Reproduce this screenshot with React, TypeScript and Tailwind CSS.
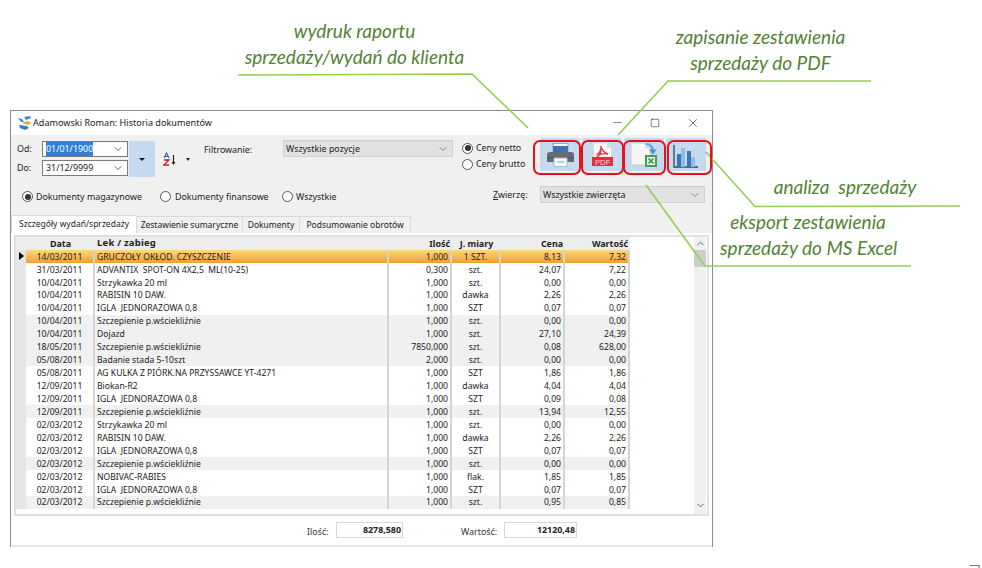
import React from 'react';
import { ChevronDown, ChevronUp, Minus, Square, X } from 'lucide-react';

interface Row {
  date: string;
  name: string;
  qty: string;
  unit: string;
  price: string;
  total: string;
  shaded?: boolean;
}

const rows: Row[] = [
  { date: '14/03/2011', name: 'GRUCZOŁY OKŁOD. CZYSZCZENIE', qty: '1,000', unit: '1 SZT.', price: '8,13', total: '7,32' },
  { date: '31/03/2011', name: 'ADVANTIX  SPOT-ON 4X2,5  ML(10-25)', qty: '0,300', unit: 'szt.', price: '24,07', total: '7,22' },
  { date: '10/04/2011', name: 'Strzykawka 20 ml', qty: '1,000', unit: 'szt.', price: '0,00', total: '0,00' },
  { date: '10/04/2011', name: 'RABISIN 10 DAW.', qty: '1,000', unit: 'dawka', price: '2,26', total: '2,26' },
  { date: '10/04/2011', name: 'IGLA  JEDNORAZOWA 0,8', qty: '1,000', unit: 'SZT', price: '0,07', total: '0,07' },
  { date: '10/04/2011', name: 'Szczepienie p.wściekliźnie', qty: '1,000', unit: 'szt.', price: '0,00', total: '0,00', shaded: true },
  { date: '10/04/2011', name: 'Dojazd', qty: '1,000', unit: 'szt.', price: '27,10', total: '24,39', shaded: true },
  { date: '18/05/2011', name: 'Szczepienie p.wściekliźnie', qty: '7850,000', unit: 'szt.', price: '0,08', total: '628,00', shaded: true },
  { date: '05/08/2011', name: 'Badanie stada 5-10szt', qty: '2,000', unit: 'szt.', price: '0,00', total: '0,00', shaded: true },
  { date: '05/08/2011', name: 'AG KULKA Z PIÓRK.NA PRZYSSAWCE YT-4271', qty: '1,000', unit: 'SZT', price: '1,86', total: '1,86' },
  { date: '12/09/2011', name: 'Biokan-R2', qty: '1,000', unit: 'dawka', price: '4,04', total: '4,04' },
  { date: '12/09/2011', name: 'IGLA  JEDNORAZOWA 0,8', qty: '1,000', unit: 'SZT', price: '0,09', total: '0,08' },
  { date: '12/09/2011', name: 'Szczepienie p.wściekliźnie', qty: '1,000', unit: 'szt.', price: '13,94', total: '12,55', shaded: true },
  { date: '02/03/2012', name: 'Strzykawka 20 ml', qty: '1,000', unit: 'szt.', price: '0,00', total: '0,00' },
  { date: '02/03/2012', name: 'RABISIN 10 DAW.', qty: '1,000', unit: 'dawka', price: '2,26', total: '2,26' },
  { date: '02/03/2012', name: 'IGLA  JEDNORAZOWA 0,8', qty: '1,000', unit: 'SZT', price: '0,07', total: '0,07' },
  { date: '02/03/2012', name: 'Szczepienie p.wściekliźnie', qty: '1,000', unit: 'szt.', price: '0,00', total: '0,00', shaded: true },
  { date: '02/03/2012', name: 'NOBIVAC-RABIES', qty: '1,000', unit: 'flak.', price: '1,85', total: '1,85' },
  { date: '02/03/2012', name: 'IGLA  JEDNORAZOWA 0,8', qty: '1,000', unit: 'SZT', price: '0,07', total: '0,07' },
  { date: '02/03/2012', name: 'Szczepienie p.wściekliźnie', qty: '1,000', unit: 'szt.', price: '0,95', total: '0,85', shaded: true },
];

const Radio = ({ checked }: { checked?: boolean }) => (
  <span className="w-[11px] h-[11px] rounded-full border border-[#555] bg-white flex items-center justify-center shrink-0">
    {checked && <span className="w-[6px] h-[6px] rounded-full bg-[#333]" />}
  </span>
);

const AppIcon = () => (
  <svg width="16" height="16" viewBox="0 0 16 16" className="shrink-0">
    <path d="M1 3l4 1 2 3-3 0z" fill="#3b8ad8" />
    <path d="M7 2l6-1 1 2-5 2z" fill="#3b8ad8" />
    <path d="M5 8l6-2 3 2-3 2z" fill="#f0a030" />
    <path d="M2 10l8 1 2 2-4 2-5-2z" fill="#2f7fd0" />
  </svg>
);

const PrinterIcon = () => (
  <svg width="27" height="24" viewBox="0 0 27 24" className="mt-[1px]">
    <rect x="6" y="0.5" width="15" height="8" fill="#f4f7fa" stroke="#9aa6b2" />
    <rect x="6" y="3" width="15" height="7" fill="#3d72ad" />
    <path d="M0 12a3 3 0 0 1 3-3h21a3 3 0 0 1 3 3v7H0z" fill="#626c76" />
    <rect x="0" y="14" width="27" height="1.5" fill="#4f5962" />
    <rect x="7" y="15" width="13" height="8.5" fill="#f7fafc" stroke="#b4bdc6" />
    <rect x="10" y="18" width="7" height="2" fill="#b5cde8" />
  </svg>
);

const PdfIcon = () => (
  <svg width="21" height="25" viewBox="0 0 21 25">
    <path d="M1.5 1h13l5 5v17h-18z" fill="#f8f8f8" stroke="#dadada" />
    <path d="M14.5 1v5h5z" fill="#dcdcdc" />
    <path d="M4 13c3-1 6-6 5-9 0 3 3 7 7 8-4-1-9 0-12 4 2-1 4-4 5-7" fill="none" stroke="#e0303c" strokeWidth="1.3" />
    <rect x="0" y="15" width="21" height="9" fill="#ed2a3f" />
    <text x="10.5" y="22.5" textAnchor="middle" fontSize="7.5" fontFamily="Liberation Sans, sans-serif" fill="#ffd9dc">PDF</text>
  </svg>
);

const ExcelIcon = () => (
  <svg width="28" height="26" viewBox="0 0 28 26">
    <path d="M1 1h14l5 5v17H1z" fill="#f6f6f6" stroke="#cbcbcb" />
    <path d="M15 1v5h5z" fill="#d8d8d8" />
    <path d="M16 2c4 0 6 2 7 6" fill="none" stroke="#56a6e2" strokeWidth="2.2" />
    <path d="M19 7.5h7.5l-3.5 5z" fill="#3f94d8" />
    <rect x="15" y="13" width="12" height="12" fill="#4a9a58" />
    <rect x="17" y="15" width="8" height="8" fill="#eef6ef" />
    <path d="M18.5 16.5l5 5M23.5 16.5l-5 5" stroke="#3e8f4c" strokeWidth="1.7" />
  </svg>
);

const ChartIcon = () => (
  <svg width="26" height="25" viewBox="0 0 26 25" className="mt-[3px]">
    <path d="M1 1v22h24" fill="none" stroke="#3a4652" strokeWidth="1.3" />
    <rect x="4" y="10" width="4" height="13" fill="#3a75b5" />
    <rect x="8" y="4" width="4" height="19" fill="#93b9e6" />
    <rect x="14" y="7" width="4" height="16" fill="#3a75b5" />
    <rect x="18" y="13" width="4" height="10" fill="#93b9e6" />
  </svg>
);

const SortIcon = () => (
  <svg width="14" height="14" viewBox="0 0 14 14">
    <path d="M1 6l2.5-5L6 6M2 4.5h3" fill="none" stroke="#2a5cb8" strokeWidth="1.1" />
    <path d="M1 8h5L1 13h5" fill="none" stroke="#c02030" strokeWidth="1.3" />
    <path d="M10.5 3v8" stroke="#222" strokeWidth="1.2" />
    <path d="M8.5 10h4l-2 3z" fill="#222" />
  </svg>
);

const ToolButton = ({ children }: { children: React.ReactNode }) => (
  <div className="w-[40px] h-[33px] rounded-[2px] bg-[#c5d9ef] flex items-center justify-center">{children}</div>
);

const Combo = ({ label, width }: { label: string; width: string }) => (
  <div className={`${width} h-[17px] bg-[#e1e1e1] border border-[#cfcfcf] flex items-center justify-between pl-[2px] pr-[3px]`}>
    <span>{label}</span>
    <ChevronDown size={12} strokeWidth={1.4} className="text-[#666]" />
  </div>
);

const Annotation = ({ className, lines }: { className: string; lines: string[] }) => (
  <div className={`absolute text-[19px] leading-[26px] italic text-[#548235] text-center whitespace-pre font-['Lato',sans-serif] ${className}`}>
    {lines.map((l) => (
      <div key={l}>{l}</div>
    ))}
  </div>
);

export default function App() {
  return (
    <div className="relative w-[982px] h-[568px] overflow-hidden bg-white pl-[10px] pt-[110px] text-[8.9px] text-[#222] font-['Noto_Sans',sans-serif]">
      <div className="w-[703px] h-[437px] flex flex-col border-l border-t border-r border-[#8c8c8c] bg-white">
        {/* title bar */}
        <div className="h-[24px] flex items-center pl-[6px] shrink-0">
          <AppIcon />
          <span className="text-[9.1px]">Adamowski Roman: Historia dokumentów</span>
          <div className="ml-auto flex">
            <div className="w-[38px] flex justify-center"><Minus size={13} strokeWidth={1} /></div>
            <div className="w-[38px] flex justify-center items-center"><Square size={10} strokeWidth={1.4} /></div>
            <div className="w-[38px] flex justify-center"><X size={14} strokeWidth={1} /></div>
          </div>
        </div>

        {/* toolbar */}
        <div className="h-[98px] shrink-0 bg-[#f0f0f0] flex flex-col">
          <div className="h-[46px] flex items-start">
            <div className="ml-[6px] mt-[6px] w-[111px] flex flex-col gap-[3px]">
              <div className="flex items-center h-[16px]">
                <span className="w-[25px]">Od:</span>
                <div className="w-[86px] h-[16px] border border-[#7a7a7a] bg-white flex items-center justify-between pl-[3px] pr-[3px]">
                  <span className="bg-[#2f7fd6] text-white">01/01/1900</span>
                  <ChevronDown size={12} strokeWidth={1.6} className="text-[#444]" />
                </div>
              </div>
              <div className="flex items-center h-[16px]">
                <span className="w-[25px]">Do:</span>
                <div className="w-[86px] h-[16px] border border-[#7a7a7a] bg-white flex items-center justify-between pl-[3px] pr-[3px]">
                  <span>31/12/9999</span>
                  <ChevronDown size={12} strokeWidth={1.6} className="text-[#444]" />
                </div>
              </div>
            </div>
            <div className="ml-[1px] mt-[6px] w-[26px] h-[36px] bg-[#c5d9ef] flex items-center justify-center">
              <span className="w-0 h-0 border-x-[3px] border-x-transparent border-t-[3px] border-t-[#111]" />
            </div>
            <div className="w-[49px] mt-[17px] pl-[8px] flex items-center gap-[9px]">
              <SortIcon />
              <span className="w-0 h-0 border-x-[2.5px] border-x-transparent border-t-[3px] border-t-[#222]" />
            </div>
            <span className="w-[79px] mt-[8px]">Filtrowanie:</span>
            <div className="mt-[5px]"><Combo label="Wszystkie pozycje" width="w-[170px]" /></div>
            <div className="ml-[9px] mt-[5px] w-[78px] flex flex-col">
              <div className="h-[16px] flex items-center gap-[3px]"><Radio checked /><span>Ceny netto</span></div>
              <div className="h-[16px] flex items-center gap-[3px]"><Radio /><span>Ceny brutto</span></div>
            </div>
            <div className="mt-[3px] flex gap-[2px]">
              <ToolButton><PrinterIcon /></ToolButton>
              <ToolButton><PdfIcon /></ToolButton>
              <ToolButton><ExcelIcon /></ToolButton>
              <ToolButton><ChartIcon /></ToolButton>
            </div>
          </div>

          <div className="h-[34px] flex items-start">
            <div className="ml-[11px] mt-[9px] flex items-center">
              <Radio checked />
              <span className="ml-[3px] w-[124px]">Dokumenty magazynowe</span>
              <Radio />
              <span className="ml-[4px] w-[107px]">Dokumenty finansowe</span>
              <Radio />
              <span className="ml-[3px] w-[197px]">Wszystkie</span>
            </div>
            <span className="mt-[7px] w-[47px]"><span className="underline">Z</span>wierzę:</span>
            <div className="mt-[5px]"><Combo label="Wszystkie zwierzęta" width="w-[165px]" /></div>
          </div>

          {/* tabs */}
          <div className="h-[18px] flex items-end text-[8.5px]">
            <div className="h-[18px] w-[126px] bg-white border border-b-0 border-[#d9d9d9] flex items-center justify-center">Szczegóły wydań/sprzedaży</div>
            <div className="h-[17px] w-[106px] bg-[#f0f0f0] border-t border-r border-[#d9d9d9] flex items-center justify-center">Zestawienie sumaryczne</div>
            <div className="h-[17px] w-[57px] bg-[#f0f0f0] border-t border-r border-[#d9d9d9] flex items-center justify-center">Dokumenty</div>
            <div className="h-[17px] w-[111px] bg-[#f0f0f0] border-t border-r border-[#d9d9d9] flex items-center justify-center">Podsumowanie obrotów</div>
          </div>
        </div>

        {/* grid */}
        <div className="mx-[3px] mt-[2px] h-[281px] shrink-0 border-2 border-[#e0e0e0] flex text-[8.6px]">
          <div className="w-[614px]">
            <div className="flex h-[13px] bg-[#ededed] font-bold items-center text-[8.9px]">
              <span className="w-[10px]" />
              <span className="w-[69px] text-center">Data</span>
              <span className="w-[294px] pl-[2px] text-[9.5px] tracking-[0.2px]">Lek / zabieg</span>
              <span className="w-[63px] text-right pr-[2px]">Ilość</span>
              <span className="w-[49px] text-center">J. miary</span>
              <span className="w-[64px] text-right pr-[2px]">Cena</span>
              <span className="w-[65px] text-right pr-[2px]">Wartość</span>
            </div>
            {rows.map((r, i) => (
              <div
                key={i}
                className={`flex h-[12.95px] items-center leading-none ${
                  i === 0 ? 'bg-gradient-to-b from-[#fcd87c] to-[#efa02c]' : r.shaded ? 'bg-[#f0f0f0]' : 'bg-white'
                }`}
              >
                <span className="w-[10px] h-full bg-[#e5e5e5] flex items-center justify-center">
                  {i === 0 && <span className="w-0 h-0 border-y-[4px] border-y-transparent border-l-[5px] border-l-black" />}
                </span>
                <span className="w-[69px] h-full pt-[1px] flex items-center justify-center border-r-2 border-[#d4d4d4]">{r.date}</span>
                <span className="w-[294px] h-full pt-[1px] flex items-center pl-[2px] border-r-2 border-[#d4d4d4] whitespace-pre">{r.name}</span>
                <span className="w-[63px] h-full pt-[1px] flex items-center justify-end pr-[2px] border-r-2 border-[#d4d4d4]">{r.qty}</span>
                <span className="w-[49px] h-full pt-[1px] flex items-center justify-center border-r-2 border-[#d4d4d4]">{r.unit}</span>
                <span className="w-[64px] h-full pt-[1px] flex items-center justify-end pr-[2px] border-r-2 border-[#d4d4d4]">{r.price}</span>
                <span className="w-[65px] h-full pt-[1px] flex items-center justify-end pr-[2px] border-r-2 border-[#d4d4d4]">{r.total}</span>
              </div>
            ))}
          </div>
          <div className="ml-auto mr-[1px] w-[12px] h-full bg-[#f0f0f0] flex flex-col items-center">
            <ChevronUp size={11} strokeWidth={2} className="text-[#555] mt-[1px]" />
            <div className="w-full h-[17px] bg-[#cdcdcd] mt-[1px]" />
            <ChevronDown size={11} strokeWidth={2} className="text-[#555] mt-auto mb-[3px]" />
          </div>
        </div>

        {/* totals */}
        <div className="flex-1 flex items-start border-b-2 border-[#e5e5e5] pt-[6px]">
          <span className="ml-[296px] w-[29px] mt-[3px] text-[#333]">Ilość:</span>
          <div className="w-[67px] h-[16px] border border-[#d8d8d8] flex items-center justify-end pr-[1px] font-bold">8278,580</div>
          <span className="ml-[58px] w-[43px] mt-[3px] text-[#333]">Wartość:</span>
          <div className="w-[73px] h-[16px] border border-[#d8d8d8] flex items-center justify-end pr-[1px] font-bold">12120,48</div>
        </div>
      </div>

      {/* annotations over the screenshot */}
      <svg className="absolute inset-0 pointer-events-none" width="982" height="568" viewBox="0 0 982 568" fill="none">
        <polyline points="238,75 472,74 528,128" stroke="#92d050" strokeWidth="1.6" />
        <polyline points="618,135 668,81 871,81" stroke="#92d050" strokeWidth="1.6" />
        <polyline points="706,152 755,206.5 960,206" stroke="#92d050" strokeWidth="1.6" />
        <polyline points="646,185 705,266 911,266" stroke="#92d050" strokeWidth="1.6" />
        <path d="M970 565.5h9v3" stroke="#777" strokeWidth="1.2" />
      </svg>
      <div className="absolute left-[533px] top-[140px] w-[48px] h-[35px] border-2 border-[#e8101c] rounded-[7px]" />
      <div className="absolute left-[581px] top-[140px] w-[43px] h-[35px] border-2 border-[#e8101c] rounded-[7px]" />
      <div className="absolute left-[623px] top-[140px] w-[43px] h-[35px] border-2 border-[#e8101c] rounded-[7px]" />
      <div className="absolute left-[667px] top-[140px] w-[45px] h-[35px] border-2 border-[#e8101c] rounded-[7px]" />

      <Annotation className="left-[244px] top-[18px] w-[221px]" lines={['wydruk raportu', 'sprzedaży/wydań do klienta']} />
      <Annotation className="left-[675px] top-[24px] w-[171px]" lines={['zapisanie zestawienia', 'sprzedaży do PDF']} />
      <Annotation className="left-[773px] top-[174px] w-[144px]" lines={['analiza  sprzedaży']} />
      <Annotation className="left-[720px] top-[209px] w-[176px]" lines={['eksport zestawienia', 'sprzedaży do MS Excel']} />
    </div>
  );
}
